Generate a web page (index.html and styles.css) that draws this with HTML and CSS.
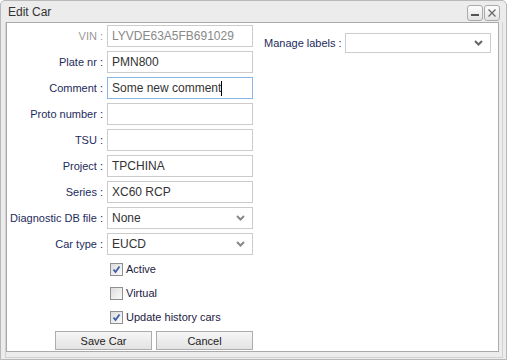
FILE: index.html
```html
<!DOCTYPE html>
<html lang="en">
<head>
    <meta charset="UTF-8">
    <title>Edit Car</title>
    <link rel="stylesheet" href="styles.css">
</head>
<body>
    <div class="window">
        <div class="titlebar">
            <span class="title">Edit Car</span>
            <div class="tools">
                <span class="tool">
                    <svg width="10" height="10" viewBox="0 0 10 10"><rect x="1" y="6" width="8" height="2" fill="#555"/></svg>
                </span>
                <span class="tool">
                    <svg width="10" height="10" viewBox="0 0 10 10"><path d="M1.5 1.5 L8.5 8.5 M8.5 1.5 L1.5 8.5" stroke="#666" stroke-width="1.2"/></svg>
                </span>
            </div>
        </div>
        <div class="frame">
            <div class="panel">
                <div class="form">
                    <div class="row">
                        <label class="disabled">VIN :</label>
                        <div class="field disabled">LYVDE63A5FB691029</div>
                    </div>
                    <div class="row">
                        <label>Plate nr :</label>
                        <div class="field">PMN800</div>
                    </div>
                    <div class="row">
                        <label>Comment :</label>
                        <div class="field focused">Some new comment<span class="caret"></span></div>
                    </div>
                    <div class="row">
                        <label>Proto number :</label>
                        <div class="field"></div>
                    </div>
                    <div class="row">
                        <label>TSU :</label>
                        <div class="field"></div>
                    </div>
                    <div class="row">
                        <label>Project :</label>
                        <div class="field">TPCHINA</div>
                    </div>
                    <div class="row">
                        <label>Series :</label>
                        <div class="field">XC60 RCP</div>
                    </div>
                    <div class="row">
                        <label>Diagnostic DB file :</label>
                        <div class="field select"><span>None</span>
                            <svg width="9" height="6" viewBox="0 0 9 6"><path d="M1 1 L4.5 4.5 L8 1" fill="none" stroke="#888" stroke-width="2"/></svg>
                        </div>
                    </div>
                    <div class="row">
                        <label>Car type :</label>
                        <div class="field select"><span>EUCD</span>
                            <svg width="9" height="6" viewBox="0 0 9 6"><path d="M1 1 L4.5 4.5 L8 1" fill="none" stroke="#888" stroke-width="2"/></svg>
                        </div>
                    </div>
                    <div class="check-row">
                        <span class="box">
                            <svg width="9" height="9" viewBox="0 0 9 9"><path d="M1.5 4.5 L3.5 7 L7.5 1.5" fill="none" stroke="#3c5fa8" stroke-width="1.8"/></svg>
                        </span>
                        <span class="check-label">Active</span>
                    </div>
                    <div class="check-row">
                        <span class="box"></span>
                        <span class="check-label">Virtual</span>
                    </div>
                    <div class="check-row">
                        <span class="box">
                            <svg width="9" height="9" viewBox="0 0 9 9"><path d="M1.5 4.5 L3.5 7 L7.5 1.5" fill="none" stroke="#3c5fa8" stroke-width="1.8"/></svg>
                        </span>
                        <span class="check-label">Update history cars</span>
                    </div>
                    <div class="buttons">
                        <button>Save Car</button>
                        <button>Cancel</button>
                    </div>
                </div>
                <div class="side">
                    <label>Manage labels :</label>
                    <div class="field select wide">
                        <span></span>
                        <svg width="9" height="6" viewBox="0 0 9 6"><path d="M1 1 L4.5 4.5 L8 1" fill="none" stroke="#666" stroke-width="2"/></svg>
                    </div>
                </div>
            </div>
        </div>
    </div>
</body>
</html>
```

FILE: styles.css
```css
body {
    margin: 0;
    font-family: "Liberation Sans", Arial, sans-serif;
}
.window {
    width: 507px;
    height: 360px;
    box-sizing: border-box;
    border: 1px solid #b8b8b8;
    border-radius: 5px 5px 0 0;
    background: #ececec;
    display: flex;
    flex-direction: column;
}
.titlebar {
    height: 21px;
    display: flex;
    align-items: center;
    justify-content: space-between;
    padding: 0 6px 0 7px;
}
.title {
    font-size: 12px;
    color: #333;
}
.tools {
    display: flex;
    gap: 1px;
    margin-top: 3px;
}
.tool {
    width: 14px;
    height: 14px;
    border: 1px solid #aaa;
    border-radius: 3px;
    background: linear-gradient(#fdfdfd, #e4e4e4);
    display: flex;
    align-items: center;
    justify-content: center;
}
.frame {
    flex: 1;
    margin: 0 3px 1px 4px;
    border: 1px solid #d2d2d2;
    border-top: none;
    display: flex;
    padding: 0 3px 5px 0;
}
.panel {
    flex: 1;
    background: #fff;
    border: 1px solid #aaa;
    display: flex;
    gap: 11px;
    padding-top: 2px;
}
.form {
    display: flex;
    flex-direction: column;
    gap: 4px;
}
.row {
    display: flex;
    align-items: center;
    gap: 4px;
}
.row label {
    width: 96px;
    text-align: right;
    font-size: 11px;
    color: #1d2b5c;
    white-space: nowrap;
}
label.disabled {
    color: #999;
}
.field {
    width: 146px;
    height: 22px;
    box-sizing: border-box;
    border: 1px solid #ccc;
    padding: 0 4px;
    font-size: 12px;
    color: #333;
    display: flex;
    align-items: center;
}
.field.disabled {
    color: #888;
}
.field.focused {
    border-color: #8ab7e6;
}
.caret {
    width: 1px;
    height: 15px;
    background: #000;
}
.select {
    justify-content: space-between;
    padding-right: 7px;
}
.check-row {
    height: 20px;
    display: flex;
    align-items: center;
    padding-left: 99px;
}
.box {
    width: 11px;
    height: 11px;
    border: 1px solid #8e8f8f;
    background: linear-gradient(135deg, #dcdcdc, #fbfbfb);
    display: flex;
    align-items: center;
    justify-content: center;
    margin: 0 3px 0 4px;
}
.check-label {
    font-size: 11px;
    color: #1b2140;
}
.buttons {
    display: flex;
    justify-content: flex-end;
    gap: 4px;
}
.buttons button {
    width: 97px;
    height: 19px;
    padding: 0;
    border: 1px solid #adadad;
    background: linear-gradient(#f6f6f6, #e3e3e3);
    font-family: inherit;
    font-size: 11px;
    color: #222;
}
.side {
    display: flex;
    align-items: center;
    align-self: flex-start;
    gap: 3px;
    margin-top: 8px;
}
.side label {
    font-size: 11px;
    color: #1d2b5c;
}
.field.wide {
    width: 146px;
    height: 20px;
}
```
